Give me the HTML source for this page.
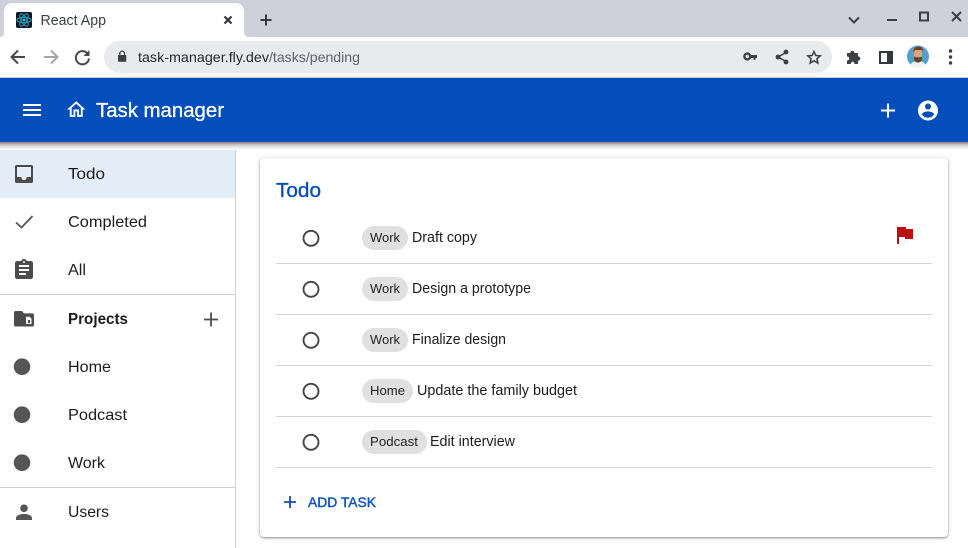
<!DOCTYPE html>
<html><head><meta charset="utf-8"><title>React App</title>
<style>
html,body{margin:0;padding:0;background:#fff;overflow:hidden}
svg{display:block}
text{font-family:"Liberation Sans",sans-serif}
.n{font-size:16px;fill:#1c1c1c}
.t{font-size:14.5px;fill:#1c1c1c}
.c{font-size:13px;fill:#222}
.card{filter:drop-shadow(0 1px 1px rgba(0,0,0,.42)) drop-shadow(0 0 3px rgba(0,0,0,.1))}
</style></head><body>
<svg width="968" height="548" viewBox="0 0 968 548" xmlns="http://www.w3.org/2000/svg">
<defs>
<linearGradient id="sh" x1="0" y1="0" x2="0" y2="1"><stop offset="0" stop-color="#808080"/><stop offset=".3" stop-color="#c0c0c0"/><stop offset=".7" stop-color="#eeeeee"/><stop offset="1" stop-color="#fff"/></linearGradient>
</defs>
<rect width="968" height="548" fill="#fff"/>
<!-- tab strip -->
<rect width="968" height="37" fill="#ced1d9"/>
<path d="M0 37c3 0 4-2 4-5V11c0-4 3-8 8-8h224c5 0 8 4 8 8v21c0 3 2 5 5 5z" fill="#fff"/>
<rect x="16" y="12" width="16" height="16" rx="2" fill="#10181f"/>
<g fill="none" stroke="#2a9fc4" stroke-width="1"><ellipse cx="24" cy="20" rx="7" ry="2.8"/><ellipse cx="24" cy="20" rx="7" ry="2.8" transform="rotate(60 24 20)"/><ellipse cx="24" cy="20" rx="7" ry="2.8" transform="rotate(120 24 20)"/></g><circle cx="24" cy="20" r="1.5" fill="#3bb5dc"/>
<text x="40.500" y="25" font-size="15" fill="#3c4043" textLength="65.500" lengthAdjust="spacingAndGlyphs">React App</text>
<path d="M224.500 16.500l7 7m0-7l-7 7" stroke="#33363b" stroke-width="2.200" fill="none"/>
<path d="M266 14.500v11m-5.500-5.500h11" stroke="#33363b" stroke-width="2" fill="none"/>
<path d="M849 17.500l5 5 5-5" stroke="#3c4043" stroke-width="2" fill="none"/>
<path d="M887 20h10" stroke="#3c4043" stroke-width="2" fill="none"/>
<rect x="920" y="12.500" width="8" height="8" fill="none" stroke="#3c4043" stroke-width="2"/>
<path d="M952 12l9 9m0-9l-9 9" stroke="#3c4043" stroke-width="2" fill="none"/>
<!-- toolbar -->
<rect y="37" width="968" height="40" fill="#fff"/>
<rect y="77" width="968" height="1" fill="#c9ccd1"/>
<path d="M25 57H12m6-6.500L11.500 57l6.500 6.500" stroke="#45484d" stroke-width="2" fill="none"/>
<path d="M44 57h13m-6-6.500l6.500 6.500-6.500 6.500" stroke="#a3a5a8" stroke-width="2" fill="none"/>
<path d="M87.500 53.500A6.600 6.600 0 1 0 89 58.500" stroke="#45484d" stroke-width="2" fill="none"/><path d="M89.500 50v6h-6z" fill="#45484d"/>
<rect x="104" y="41" width="728" height="32" rx="16" fill="#e8eaed"/>
<rect x="118" y="55" width="8.300" height="6.800" rx=".8" fill="#3c4043"/>
<path d="M119.800 55.500v-2a2.350 2.350 0 0 1 4.700 0v2" fill="none" stroke="#3c4043" stroke-width="1.300"/>
<text x="138" y="62" font-size="14" fill="#25282c" textLength="131" lengthAdjust="spacingAndGlyphs">task-manager.fly.dev</text>
<text x="269" y="62" font-size="14" fill="#5f6368" textLength="91" lengthAdjust="spacingAndGlyphs">/tasks/pending</text>
<circle cx="747.300" cy="56.500" r="2.900" fill="none" stroke="#3c4043" stroke-width="2.400"/><path d="M750 55h7v3h-1.500v1.800h-2V58H750z" fill="#3c4043"/>
<path d="M787 52l-9 5 9 5" fill="none" stroke="#3c4043" stroke-width="1.500"/><circle cx="786" cy="52" r="2.400" fill="#3c4043"/><circle cx="786" cy="62" r="2.400" fill="#3c4043"/><circle cx="778" cy="57" r="2.400" fill="#3c4043"/>
<path d="M814 51.500l1.800 4 4.400.4-3.300 2.900 1 4.300-3.900-2.300-3.900 2.300 1-4.300-3.300-2.900 4.400-.4z" fill="none" stroke="#3c4043" stroke-width="1.500"/>
<path d="M847 53h3.200c0-3 4.300-3 4.300 0h3.500v3.300c3 0 3 4.500 0 4.500v3.200h-3.500c0-3-3.700-3-3.700 0H847v-3.500c3 0 3-4 0-4z" fill="#3c4043"/>
<rect x="880" y="52" width="12" height="11" fill="none" stroke="#33363b" stroke-width="2"/><rect x="887" y="51" width="6" height="13" fill="#33363b"/>
<circle cx="918" cy="56.500" r="11" fill="#4fa2cf"/>
<path d="M910 65c2-3 5-4 8-4s6 1 8 4c-2 2-5 3-8 3s-6-1-8-3z" fill="#f2f2f2"/>
<rect x="914" y="48.500" width="8" height="11" rx="3" fill="#dda27c"/><path d="M913.500 52.500c-.5-4 2-6 5-6s5 2 4.500 6l-1-2.500h-7z" fill="#6b4026"/><path d="M914 56.500c1 1 7 1 8 0v2c0 3-2 4-4 4s-4-1-4-4z" fill="#6b4026"/>
<circle cx="950.500" cy="51" r="1.700" fill="#3c4043"/><circle cx="950.500" cy="57" r="1.700" fill="#3c4043"/><circle cx="950.500" cy="63" r="1.700" fill="#3c4043"/>
<!-- sidebar + shadow -->
<rect x="235" y="142" width="1" height="406" fill="#d0d0d0"/>
<rect y="150" width="235" height="48" fill="#e3edf7"/>
<!-- app bar -->
<rect y="142" width="968" height="8" fill="url(#sh)"/>
<rect y="78" width="968" height="64" fill="#034ebb"/>
<path d="M23 116h18v-2H23zm0-5h18v-2H23zm0-7v2h18v-2z" fill="#fff"/>
<path transform="translate(65.200 98.500) scale(.92)" d="M12 5.690l5 4.500V18h-2v-6H9v6H7v-7.810l5-4.500M12 3L2 12h3v8h6v-6h2v6h6v-8h3L12 3z" fill="#fff"/>
<text x="96" y="117" font-size="20" fill="#fff" stroke="#fff" stroke-width=".3" textLength="128" lengthAdjust="spacingAndGlyphs">Task manager</text>
<path d="M888 103.500v14m-7-7h14" stroke="#fff" stroke-width="2" fill="none"/>
<path d="M928 100.500c-5.520 0-10 4.480-10 10s4.480 10 10 10 10-4.480 10-10-4.480-10-10-10zm0 3c1.660 0 3 1.340 3 3s-1.340 3-3 3-3-1.340-3-3 1.340-3 3-3zm0 14.200c-2.500 0-4.710-1.280-6-3.220.03-1.990 4-3.080 6-3.080 1.990 0 5.970 1.090 6 3.080-1.290 1.940-3.500 3.220-6 3.220z" fill="#fff"/>
<!-- sidebar icons -->
<g fill="#4c4c4c">
<path d="M15 166.500c0-.8.700-1.500 1.500-1.500h15c.8 0 1.500.7 1.500 1.500v15c0 .8-.7 1.500-1.500 1.500h-15c-.8 0-1.500-.7-1.500-1.500zm2 .5v10h4.200c0 1.700 1.300 3 2.800 3s2.800-1.300 2.800-3H31v-10z" fill-rule="evenodd"/>
<path d="M31 261h-4.200c-.4-1.200-1.500-2-2.800-2s-2.400.8-2.800 2H17c-1.100 0-2 .9-2 2v14c0 1.100.9 2 2 2h14c1.100 0 2-.9 2-2v-14c0-1.100-.9-2-2-2zm-7 0c.55 0 1 .45 1 1s-.45 1-1 1-1-.45-1-1 .45-1 1-1zm2 14h-7v-2h7zm3-4H19v-2h10zm0-4H19v-2h10z"/>
<path d="M14 312.500c0-.8.600-1.500 1.400-1.500h6.600l2 2.400h8.500c.8 0 1.500.7 1.500 1.500v10.100c0 .8-.7 1.500-1.500 1.500H15.500c-.8 0-1.500-.7-1.500-1.500zm12 4.300v7.200h5.500v-5.200l-2-2z" fill-rule="evenodd"/>
<rect x="28" y="320" width="2" height="3"/>
</g>
<g fill="#555">
<circle cx="22" cy="366.700" r="8.300"/><circle cx="22" cy="414.700" r="8.300"/><circle cx="22" cy="462.700" r="8.300"/>
<path d="M24 512c2.200 0 3.800-1.700 3.800-3.800s-1.600-3.700-3.800-3.700-3.800 1.600-3.800 3.700 1.600 3.800 3.800 3.800zm0 1.900c-2.700 0-8 1.300-8 4v2.100h16v-2.100c0-2.700-5.300-4-8-4z"/>
</g>
<path d="M16 222.500l5.500 5L32.500 216" stroke="#555" stroke-width="1.800" fill="none"/>
<path d="M211 312.500v14m-7-7h14" stroke="#4c4c4c" stroke-width="1.800" fill="none"/>
<text class="n" x="68" y="179" textLength="37" lengthAdjust="spacingAndGlyphs">Todo</text>
<text class="n" x="68" y="227" textLength="79" lengthAdjust="spacingAndGlyphs">Completed</text>
<text class="n" x="68" y="275" textLength="18" lengthAdjust="spacingAndGlyphs">All</text>
<text class="n" x="68" y="324" font-weight="700" textLength="60" lengthAdjust="spacingAndGlyphs">Projects</text>
<text class="n" x="68" y="372" textLength="43" lengthAdjust="spacingAndGlyphs">Home</text>
<text class="n" x="68" y="420" textLength="59" lengthAdjust="spacingAndGlyphs">Podcast</text>
<text class="n" x="68" y="468" textLength="37" lengthAdjust="spacingAndGlyphs">Work</text>
<text class="n" x="68" y="517" textLength="41" lengthAdjust="spacingAndGlyphs">Users</text>
<rect y="294" width="235" height="1" fill="#d0d0d0"/>
<rect y="487" width="235" height="1" fill="#d0d0d0"/>
<!-- card -->
<rect class="card" x="260" y="158" width="688" height="379" rx="4" fill="#fff"/>
<text x="276" y="197" font-size="20" fill="#034ebb" stroke="#034ebb" stroke-width=".3" textLength="45" lengthAdjust="spacingAndGlyphs">Todo</text>
<g fill="#d2d2d2"><rect x="276" y="263" width="656" height="1"/><rect x="276" y="314" width="656" height="1"/><rect x="276" y="365" width="656" height="1"/><rect x="276" y="416" width="656" height="1"/><rect x="276" y="467" width="656" height="1"/></g>
<g fill="none" stroke="#444" stroke-width="1.900"><circle cx="311" cy="238.300" r="7.500"/><circle cx="311" cy="289.300" r="7.500"/><circle cx="311" cy="340.300" r="7.500"/><circle cx="311" cy="391.300" r="7.500"/><circle cx="311" cy="442.300" r="7.500"/></g>
<g fill="#e0e0e0"><rect x="362" y="226" width="46" height="24" rx="12"/><rect x="362" y="277" width="46" height="24" rx="12"/><rect x="362" y="328" width="46" height="24" rx="12"/><rect x="362" y="379" width="51" height="24" rx="12"/><rect x="362" y="430" width="65" height="24" rx="12"/></g>
<text class="c" x="370" y="242" textLength="30" lengthAdjust="spacingAndGlyphs">Work</text>
<text class="c" x="370" y="293" textLength="30" lengthAdjust="spacingAndGlyphs">Work</text>
<text class="c" x="370" y="344" textLength="30" lengthAdjust="spacingAndGlyphs">Work</text>
<text class="c" x="370" y="395" textLength="35" lengthAdjust="spacingAndGlyphs">Home</text>
<text class="c" x="370" y="446" textLength="48" lengthAdjust="spacingAndGlyphs">Podcast</text>
<text class="t" x="412" y="242" textLength="65" lengthAdjust="spacingAndGlyphs">Draft copy</text>
<text class="t" x="412" y="293" textLength="119" lengthAdjust="spacingAndGlyphs">Design a prototype</text>
<text class="t" x="412" y="344" textLength="94" lengthAdjust="spacingAndGlyphs">Finalize design</text>
<text class="t" x="417" y="395" textLength="160" lengthAdjust="spacingAndGlyphs">Update the family budget</text>
<text class="t" x="430" y="446" textLength="85" lengthAdjust="spacingAndGlyphs">Edit interview</text>
<path d="M897 227h9v2h7v10h-8v-2h-6v7h-2z" fill="#bd0f0f"/>
<path d="M290 496v12m-6-6h12" stroke="#0a52bf" stroke-width="1.800" fill="none"/>
<text x="308" y="507" font-size="14" fill="#0a52bf" stroke="#0a52bf" stroke-width=".4" textLength="68" lengthAdjust="spacingAndGlyphs">ADD TASK</text>
</svg>
</body></html>
